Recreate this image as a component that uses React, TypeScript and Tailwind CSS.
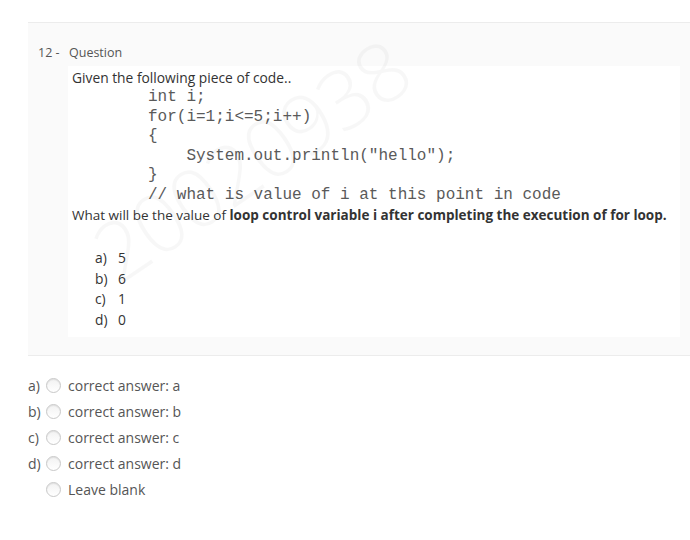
import React from "react";

const options = [
  { key: "a", text: "5" },
  { key: "b", text: "6" },
  { key: "c", text: "1" },
  { key: "d", text: "0" },
];

const answers = [
  { label: "a)", text: "correct answer: a" },
  { label: "b)", text: "correct answer: b" },
  { label: "c)", text: "correct answer: c" },
  { label: "d)", text: "correct answer: d" },
  { label: "", text: "Leave blank" },
];

function Radio() {
  return (
    <span className="inline-block w-[15px] h-[15px] rounded-full border border-[#c8c8c8] bg-gradient-to-b from-[#f2f2f2] to-[#ffffff] shadow-[inset_0_1px_1px_rgba(0,0,0,0.08)]" />
  );
}

export default function App() {
  return (
    <div className="w-[690px] h-[540px] bg-white overflow-hidden font-['Open_Sans',sans-serif] text-[#333]">
      <div className="relative ml-[28px] mt-[22px] bg-[#fafafa] border-t border-b border-[#ececec] pb-[18px] overflow-hidden">
        {/* Header */}
        <div className="flex items-center pt-[21px] pl-[10px] text-[12.5px] text-[#555] leading-[18px]">
          <span className="w-[31px]">12 -</span>
          <span>Question</span>
        </div>

        {/* Question body */}
        <div className="ml-[40px] mr-[10px] mt-[4px] bg-white pl-[4px] pt-[3px] pb-[6px]">
          <p className="text-[13.8px] leading-[18px] text-[#333]">Given the following piece of code..</p>
          <pre className="ml-[76px] mt-[1px] font-['Liberation_Mono',monospace] text-[16px] leading-[19.5px] text-[#5a5a5a]">
{`int i;
for(i=1;i<=5;i++)
{
    System.out.println("hello");
}
// what is value of i at this point in code`}
          </pre>
          <p className="mt-[1px] text-[13.5px] leading-[18px] text-[#333]">
            What will be the value of <b className="font-bold">loop control variable i after completing the execution of for loop.</b>
          </p>
          <ul className="mt-[24px] ml-[23px] text-[13.8px] leading-[20.7px] text-[#333]">
            {options.map((o) => (
              <li key={o.key} className="flex">
                <span className="w-[23px]">{o.key})</span>
                <span>{o.text}</span>
              </li>
            ))}
          </ul>
        </div>

        {/* Watermark */}
        <div className="pointer-events-none absolute left-[222px] top-[136px] -translate-x-1/2 -translate-y-1/2 -rotate-[34deg] text-[82px] font-light leading-none tracking-[-2px] text-[rgba(0,0,0,0.03)] whitespace-nowrap">
          20020938
        </div>
      </div>

      {/* Answers */}
      <div className="mt-[20px] ml-[28px] flex flex-col gap-[7px] text-[14px] leading-[19px] text-[#555]">
        {answers.map((a, i) => (
          <label key={i} className="flex items-center">
            <span className="w-[18px]">{a.label}</span>
            <Radio />
            <span className="ml-[7px]">{a.text}</span>
          </label>
        ))}
      </div>
    </div>
  );
}
